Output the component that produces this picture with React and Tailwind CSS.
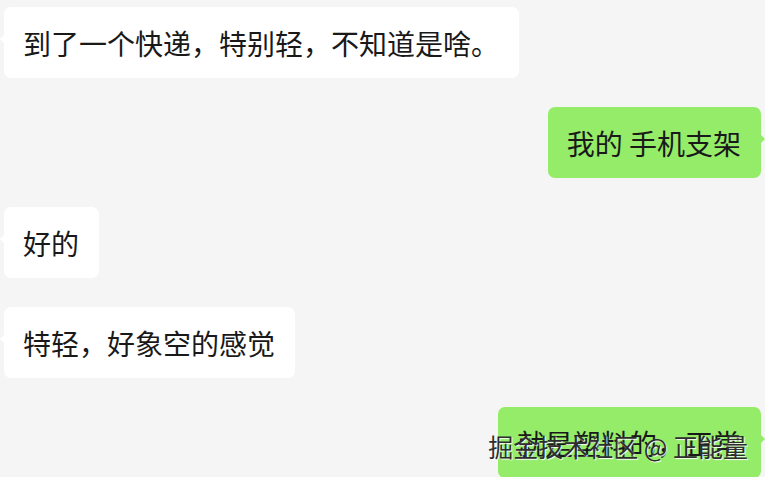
const messages = [
  { text: '到了一个快递，特别轻，不知道是啥。', mine: false },
  { text: '我的 手机支架', mine: true },
  { text: '好的', mine: false },
  { text: '特轻，好象空的感觉', mine: false },
  { text: '就是塑料的，正常', mine: true },
];

function Bubble({ text, mine }) {
  return (
    <div className={`flex ${mine ? 'justify-end pr-[4px]' : 'justify-start pl-[4px]'}`}>
      <div
        className={`relative h-[71px] flex items-center pl-[19px] pr-[20px] rounded-[7px] text-[28px] leading-none text-[#191919] whitespace-nowrap ${
          mine ? 'bg-[#95ec69]' : 'bg-white'
        }`}
      >
        {mine ? (
          <span className="absolute -right-[4px] top-[27px] w-0 h-0 border-y-[5px] border-y-transparent border-l-[5px] border-l-[#95ec69]" />
        ) : (
          <span className="absolute -left-[4px] top-[27px] w-0 h-0 border-y-[5px] border-y-transparent border-r-[5px] border-r-white" />
        )}
        {text}
      </div>
    </div>
  );
}

export default function App() {
  return (
    <div
      className="relative w-[765px] h-[477px] overflow-hidden bg-[#f5f5f5] pt-[7px] flex flex-col gap-[29px]"
      style={{ fontFamily: '"Noto Sans CJK SC", "Noto Sans", sans-serif' }}
    >
      {messages.map((m, i) => (
        <Bubble key={i} text={m.text} mine={m.mine} />
      ))}

      {/* watermark */}
      <div className="absolute right-[17px] bottom-[18px] text-[25px] leading-none text-[#2e2e2e] whitespace-nowrap [text-shadow:1px_1px_1px_rgba(255,255,255,0.95)]">
        掘金技术社区 @ 正能量
      </div>
    </div>
  );
}
